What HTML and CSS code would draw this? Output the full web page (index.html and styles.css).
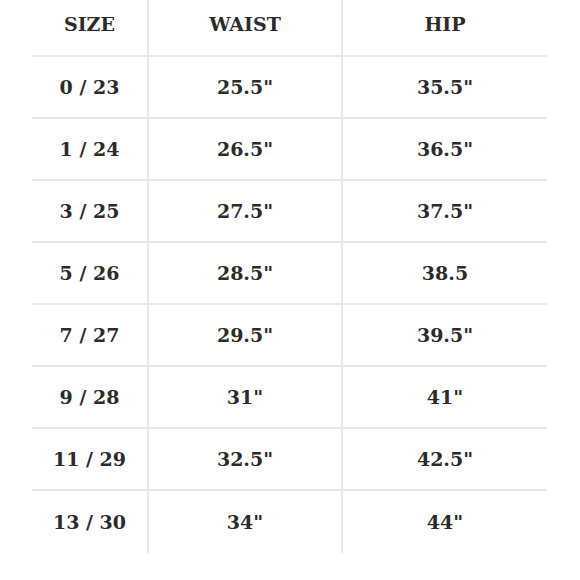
FILE: index.html
```html
<!DOCTYPE html>
<html>
<head>
<meta charset="utf-8">
<link rel="stylesheet" href="styles.css">
</head>
<body>
<div class="chart">
  <div class="cell head">SIZE</div><div class="cell head">WAIST</div><div class="cell head last-col">HIP</div>
  <div class="cell">0 / 23</div><div class="cell">25.5"</div><div class="cell last-col">35.5"</div>
  <div class="cell">1 / 24</div><div class="cell">26.5"</div><div class="cell last-col">36.5"</div>
  <div class="cell">3 / 25</div><div class="cell">27.5"</div><div class="cell last-col">37.5"</div>
  <div class="cell">5 / 26</div><div class="cell">28.5"</div><div class="cell last-col">38.5</div>
  <div class="cell">7 / 27</div><div class="cell">29.5"</div><div class="cell last-col">39.5"</div>
  <div class="cell">9 / 28</div><div class="cell">31"</div><div class="cell last-col">41"</div>
  <div class="cell">11 / 29</div><div class="cell">32.5"</div><div class="cell last-col">42.5"</div>
  <div class="cell last-row">13 / 30</div><div class="cell last-row">34"</div><div class="cell last-row last-col">44"</div>
</div>
</body>
</html>
```
FILE: styles.css
```css
html, body {
  margin: 0;
  padding: 0;
  background: #ffffff;
}
.chart {
  margin-left: 32px;
  width: 515px;
  display: grid;
  grid-template-columns: 117px 194px 204px;
  grid-template-rows: 57px repeat(8, 62px);
  font-family: "DejaVu Serif", serif;
  font-weight: bold;
  font-size: 19px;
  color: #2b2b2b;
}
.cell {
  display: flex;
  align-items: center;
  justify-content: center;
  border-bottom: 2px solid #e8e8e8;
  border-right: 2px solid #e8e8e8;
  box-sizing: border-box;
  padding-bottom: 1px;
}
.head {
  padding-bottom: 8px;
}
.last-col {
  border-right: none;
}
.last-row {
  border-bottom: none;
}
```
